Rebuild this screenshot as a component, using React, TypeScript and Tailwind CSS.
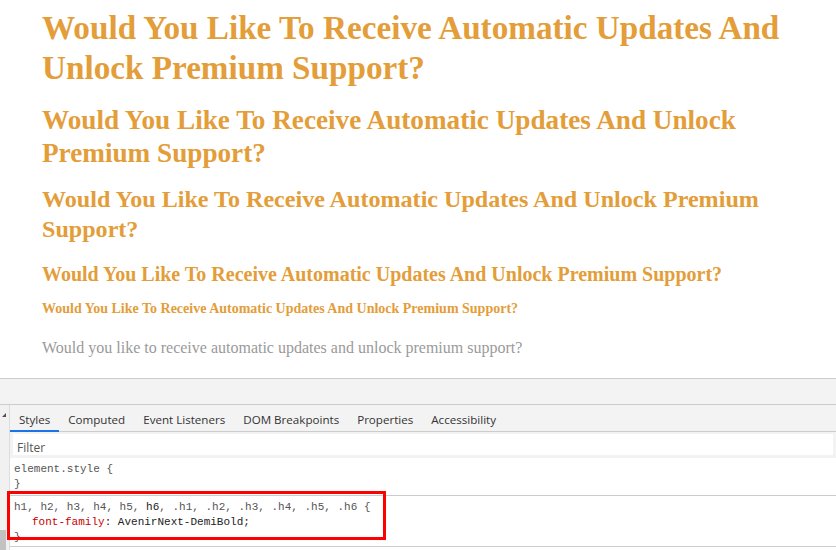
const headingText = "Would You Like To Receive Automatic Updates And Unlock Premium Support?";

const tabs = [
	{ label: "Styles", active: true },
	{ label: "Computed" },
	{ label: "Event Listeners" },
	{ label: "DOM Breakpoints" },
	{ label: "Properties" },
	{ label: "Accessibility" },
];

const App = () => {
	return (
		<div className="w-[836px] h-[550px] overflow-hidden bg-white flex flex-col">
			<div
				className="h-[378px] px-[42px] pt-[8px] text-[#e39d39] font-bold"
				style={{ fontFamily: '"Liberation Serif", serif' }}
			>
				<h1 className="text-[33.2px] leading-[40px]">{headingText}</h1>
				<h2 className="text-[27.2px] leading-[33px] mt-[16px]">{headingText}</h2>
				<h3 className="text-[24.1px] leading-[30px] mt-[14px]">{headingText}</h3>
				<h4 className="text-[20px] leading-[24px] mt-[18px]">{headingText}</h4>
				<h5 className="text-[14px] leading-[18px] mt-[14px]">{headingText}</h5>
				<p className="text-[16px] leading-[20px] mt-[20px] font-normal text-[#9a9a9a]">
					Would you like to receive automatic updates and unlock premium support?
				</p>
			</div>

			{/* devtools */}
			<div
				className="flex-1 flex flex-col border-t border-[#cccccc]"
				style={{ fontFamily: '"Open Sans", sans-serif' }}
			>
				<div className="h-[26px] bg-[#f3f3f3] border-b border-[#cccccc]" />
				<div className="flex flex-1">
					<div className="w-[10px] bg-[#f1f1f1] border-r border-[#dddddd] flex flex-col justify-between">
						<svg width="9" height="14" viewBox="0 0 9 14" className="mt-[3px]">
							<path d="M2 9 L6 5 L6 9 Z" fill="#505050" />
						</svg>
						<div className="w-[6px] h-[20px] bg-[#c2c2c2]" />
					</div>
					<div className="flex-1 flex flex-col">
						<div className="h-[27px] bg-[#f3f3f3] border-b border-[#cccccc] flex items-end text-[11.6px] text-[#333333]">
							{tabs.map((t) => (
								<div
									key={t.label}
									className={
										t.active
											? "px-[9px] h-full flex items-center pt-[3px] border-b-2 border-[#1a73e8] -mb-px"
											: "px-[9px] h-full flex items-center pt-[3px]"
									}
								>
									{t.label}
								</div>
							))}
						</div>
						<div className="bg-[#f3f3f3] pt-[2px] pb-[3px] px-[3px]">
							<div className="bg-white h-[21px] flex items-center pt-[6px] px-[4px] text-[12px] text-[#555555]">
								Filter
							</div>
						</div>
						<div
							className="text-[11px] leading-[15px] text-[#555555]"
							style={{ fontFamily: '"Liberation Mono", monospace' }}
						>
							<div className="px-[4px] pt-[4px] h-[38px] border-b border-[#cccccc]">
								<div>element.style {"{"}</div>
								<div>{"}"}</div>
							</div>
							<div className="h-[51px] border-b border-[#cccccc] pt-[4px] relative">
								<div className="absolute left-[-3px] top-[-5px] w-[379px] h-[49px] border-[3px] border-[#ff0000]" />
								<div className="px-[4px]">
									h1, h2, h3, h4, h5, <span className="text-[#222222]">h6</span>, .h1, .h2, .h3, .h4, .h5, .h6 {"{"}
								</div>
								<div className="pl-[22px] text-[#222222]">
									<span className="text-[#c80000]">font-family</span>: AvenirNext-DemiBold;
								</div>
								<div className="px-[4px]">{"}"}</div>
							</div>
						</div>
					</div>
				</div>
			</div>
		</div>
	);
};

export default App;
